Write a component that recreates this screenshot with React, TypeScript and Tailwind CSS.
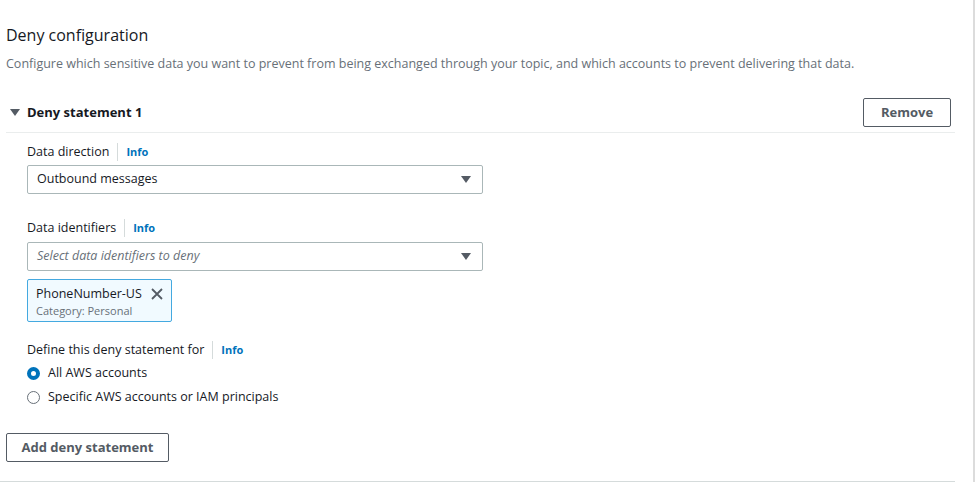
import React, { useState } from 'react';

const font = { fontFamily: '"Open Sans", "Noto Sans", Arial, sans-serif' };

function Caret() {
  return (
    <svg width="10" height="8" viewBox="0 0 10 8" className="shrink-0">
      <path d="M0 0 L10 0 L5 7 Z" fill="#545b64" />
    </svg>
  );
}

function FieldLabel({ text }: { text: string }) {
  return (
    <div className="flex items-center h-[18px] text-[12.5px] text-[#16191f]">
      <span>{text}</span>
      <span className="mx-2 h-[18px] w-px bg-[#d5dbdb]" />
      <span className="text-[11px] font-bold text-[#0073bb]">Info</span>
    </div>
  );
}

function Select({ value, placeholder }: { value?: string; placeholder?: string }) {
  return (
    <div className="flex items-center justify-between w-[456px] h-[29px] pl-[9px] pr-[11px] border border-[#aab7b8] rounded-[2px] bg-white">
      {value ? (
        <span className="text-[12.5px] text-[#16191f]">{value}</span>
      ) : (
        <span className="text-[12.5px] italic text-[#687078]">{placeholder}</span>
      )}
      <Caret />
    </div>
  );
}

function Radio({ checked, label }: { checked: boolean; label: string }) {
  return (
    <div className="flex items-center h-[24px] text-[12.5px] text-[#16191f]">
      {checked ? (
        <span className="w-[13px] h-[13px] rounded-full border-[4px] border-[#0073bb] bg-white" />
      ) : (
        <span className="w-[13px] h-[13px] rounded-full border border-[#687078] bg-white" />
      )}
      <span className="ml-[8px]">{label}</span>
    </div>
  );
}

export default function App() {
  const [open] = useState(true);

  return (
    <div className="relative w-[975px] h-[482px] bg-white overflow-hidden" style={font}>
      <div className="absolute right-0 top-0 h-full w-[2px] bg-[#dcdcdc]" />
      <div className="w-[955px] h-full flex flex-col border-b border-[#d5dbdb]">
        <div className="pl-[6px] pt-[24px]">
          <h2 className="text-[16px] leading-[22px] text-[#16191f]">Deny configuration</h2>
          <p className="mt-[9px] text-[12.5px] leading-[18px] text-[#687078]">
            Configure which sensitive data you want to prevent from being exchanged through your topic, and which accounts to prevent delivering that data.
          </p>
        </div>

        <div className="ml-[6px] mt-[24px] pr-[4px] flex items-center justify-between h-[36px] border-b border-[#eaeded] pb-[4px]">
          <div className="flex items-center">
            <svg width="10" height="8" viewBox="0 0 10 8" className="ml-[4px]">
              <path d="M0 0 L10 0 L5 7 Z" fill="#545b64" />
            </svg>
            <span className="ml-[7px] text-[13px] font-bold text-[#16191f]">Deny statement 1</span>
          </div>
          <button className="w-[88px] h-[29px] border border-[#545b64] rounded-[2px] text-[13px] font-bold text-[#545b64] bg-white">
            Remove
          </button>
        </div>

        {open && (
          <div className="pl-[27px] pt-[10px] flex flex-col">
            <FieldLabel text="Data direction" />
            <div className="mt-[4px]">
              <Select value="Outbound messages" />
            </div>

            <div className="mt-[25px]">
              <FieldLabel text="Data identifiers" />
            </div>
            <div className="mt-[5px]">
              <Select placeholder="Select data identifiers to deny" />
            </div>

            <div className="mt-[8px] w-[145px] h-[43px] border border-[#44a9e0] rounded-[2px] bg-[#f1faff] pl-[8px] pt-[5px]">
              <div className="flex items-center justify-between pr-[8px]">
                <span className="text-[12.5px] text-[#16191f] leading-[18px]">PhoneNumber-US</span>
                <svg width="12" height="12" viewBox="0 0 12 12">
                  <path d="M1 1 L11 11 M11 1 L1 11" stroke="#545b64" strokeWidth="1.8" />
                </svg>
              </div>
              <div className="text-[11px] leading-[15px] text-[#687078]">Category: Personal</div>
            </div>

            <div className="mt-[19px]">
              <FieldLabel text="Define this deny statement for" />
            </div>
            <div className="mt-[2px] flex flex-col">
              <Radio checked label="All AWS accounts" />
              <Radio checked={false} label="Specific AWS accounts or IAM principals" />
            </div>
          </div>
        )}

        <div className="pl-[6px] mt-[24px]">
          <button className="w-[163px] h-[29px] border border-[#545b64] rounded-[2px] text-[13px] font-bold text-[#545b64] bg-white">
            Add deny statement
          </button>
        </div>
      </div>
    </div>
  );
}
